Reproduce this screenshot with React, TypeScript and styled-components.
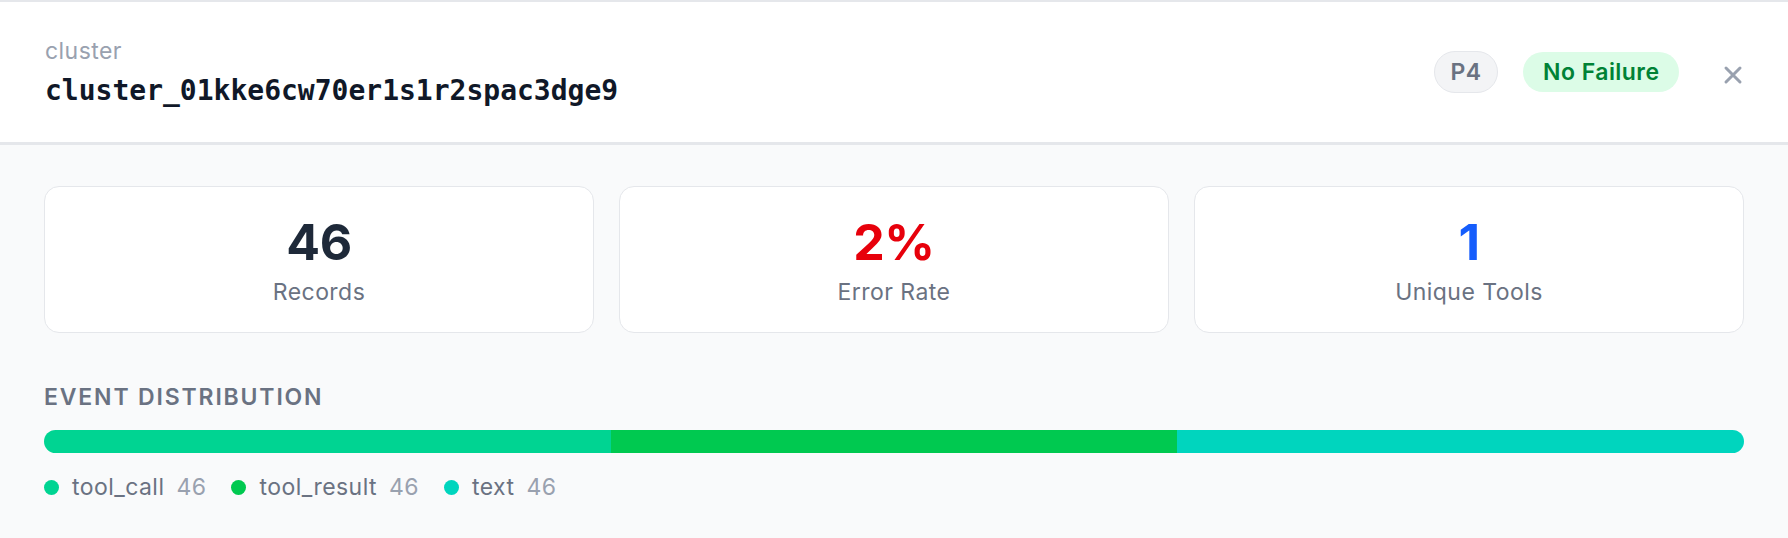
import React from 'react'
import styled, { createGlobalStyle } from 'styled-components'

const colors = {
  bg: '#f9fafb',
  border: '#e5e7eb',
  gray400: '#99a1af',
  gray500: '#6a7282',
  gray800: '#1e2939',
  gray900: '#101828',
  red: '#e7000b',
  blue: '#155dfc',
  greenBg: '#dcfce7',
  greenText: '#008236',
}

// small UI text: Inter, opened up a little to read like a text-size system face
const smallText = `
  font-size: 23px;
  letter-spacing: 0.45px;
`

const GlobalStyle = createGlobalStyle`
  html, body {
    margin: 0;
    padding: 0;
    background: ${colors.bg};
    font-family: Inter, "Noto Sans", sans-serif;
  }
  * {
    box-sizing: border-box;
  }
`

const Panel = styled.div`
  width: 1788px;
  height: 538px;
  background: ${colors.bg};
  overflow: hidden;
`

const Header = styled.header`
  display: flex;
  align-items: center;
  justify-content: space-between;
  height: 145px;
  padding: 0 45px;
  background: #fff;
  border-top: 2px solid ${colors.border};
  border-bottom: 3px solid ${colors.border};
`

const TitleBlock = styled.div`
  display: flex;
  flex-direction: column;
`

const Kicker = styled.span`
  ${smallText}
  line-height: 30px;
  color: ${colors.gray400};
`

const ClusterId = styled.span`
  margin-top: 7px;
  font-family: "DejaVu Sans Mono", "Liberation Mono", monospace;
  font-weight: 700;
  font-size: 28px;
  line-height: 36px;
  color: ${colors.gray900};
`

const Actions = styled.div`
  display: flex;
  align-items: center;
  gap: 44px;
`

const Badges = styled.div`
  display: flex;
  align-items: center;
  gap: 25px;
`

interface BadgeProps {
  tone: 'neutral' | 'success'
}

const Badge = styled.span<BadgeProps>`
  display: inline-flex;
  align-items: center;
  ${smallText}
  font-weight: 600;
  line-height: 27px;
  border-radius: 999px;
  ${({ tone }) =>
    tone === 'neutral'
      ? `
    padding: 6.5px 15.5px 6.5px 16px;
    background: #f3f4f6;
    color: ${colors.gray500};
    border: 1.5px solid ${colors.border};
  `
      : `
    padding: 6.5px 19.5px 6.5px 20px;
    background: ${colors.greenBg};
    color: ${colors.greenText};
  `}
`

const CloseButton = styled.button`
  display: flex;
  align-items: center;
  justify-content: center;
  width: 20px;
  height: 20px;
  padding: 0;
  margin-top: 5px;
  border: none;
  background: none;
  color: ${colors.gray400};
  cursor: pointer;
`

const Body = styled.section`
  padding: 41px 44px 0;
`

const Stats = styled.div`
  display: grid;
  grid-template-columns: repeat(3, 1fr);
  gap: 25px;
`

const StatCard = styled.div`
  display: flex;
  flex-direction: column;
  align-items: center;
  height: 147px;
  padding-top: 25px;
  background: #fff;
  border: 1.5px solid ${colors.border};
  border-radius: 15px;
`

const StatValue = styled.span<{ color: string }>`
  font-size: 50px;
  font-weight: 700;
  line-height: 60px;
  letter-spacing: -0.5px;
  color: ${({ color }) => color};
`

const StatLabel = styled.span`
  margin-top: 5px;
  ${smallText}
  line-height: 30px;
  color: ${colors.gray500};
`

const SectionTitle = styled.h3`
  margin: 50px 0 19px;
  font-size: 23px;
  font-weight: 600;
  line-height: 28px;
  letter-spacing: 0.08em;
  text-transform: uppercase;
  color: ${colors.gray500};
`

const Bar = styled.div`
  display: flex;
  height: 23px;
  border-radius: 999px;
  overflow: hidden;
`

const Segment = styled.div<{ color: string }>`
  background: ${({ color }) => color};
`

const Legend = styled.div`
  display: flex;
  align-items: center;
  gap: 25px;
  margin-top: 20px;
`

const LegendItem = styled.div`
  display: flex;
  align-items: center;
  ${smallText}
  line-height: 28px;
`

const Dot = styled.span<{ color: string }>`
  width: 15px;
  height: 15px;
  margin-right: 13px;
  border-radius: 50%;
  background: ${({ color }) => color};
`

const LegendName = styled.span`
  color: ${colors.gray500};
`

const LegendCount = styled.span`
  margin-left: 12px;
  color: ${colors.gray400};
`

const CloseIcon = () => (
  <svg width="20" height="20" viewBox="0 0 20 20" fill="none">
    <path
      d="M3 3 17 17M17 3 3 17"
      stroke="currentColor"
      strokeWidth="3"
      strokeLinecap="round"
    />
  </svg>
)

const stats = [
  { value: '46', label: 'Records', color: colors.gray800 },
  { value: '2%', label: 'Error Rate', color: colors.red },
  { value: '1', label: 'Unique Tools', color: colors.blue },
]

const events = [
  { name: 'tool_call', count: 46, color: '#00d492' },
  { name: 'tool_result', count: 46, color: '#00c950' },
  { name: 'text', count: 46, color: '#00d5be' },
]

const total = events.reduce((sum, e) => sum + e.count, 0)

export default function App() {
  return (
    <>
      <GlobalStyle />
      <Panel>
        <Header>
          <TitleBlock>
            <Kicker>cluster</Kicker>
            <ClusterId>cluster_01kke6cw70er1s1r2spac3dge9</ClusterId>
          </TitleBlock>
          <Actions>
            <Badges>
              <Badge tone="neutral">P4</Badge>
              <Badge tone="success">No Failure</Badge>
            </Badges>
            <CloseButton aria-label="Close">
              <CloseIcon />
            </CloseButton>
          </Actions>
        </Header>
        <Body>
          <Stats>
            {stats.map((s) => (
              <StatCard key={s.label}>
                <StatValue color={s.color}>{s.value}</StatValue>
                <StatLabel>{s.label}</StatLabel>
              </StatCard>
            ))}
          </Stats>
          <SectionTitle>Event Distribution</SectionTitle>
          <Bar>
            {events.map((e) => (
              <Segment
                key={e.name}
                color={e.color}
                style={{ width: `${(e.count / total) * 100}%` }}
              />
            ))}
          </Bar>
          <Legend>
            {events.map((e) => (
              <LegendItem key={e.name}>
                <Dot color={e.color} />
                <LegendName>{e.name}</LegendName>
                <LegendCount>{e.count}</LegendCount>
              </LegendItem>
            ))}
          </Legend>
        </Body>
      </Panel>
    </>
  )
}
